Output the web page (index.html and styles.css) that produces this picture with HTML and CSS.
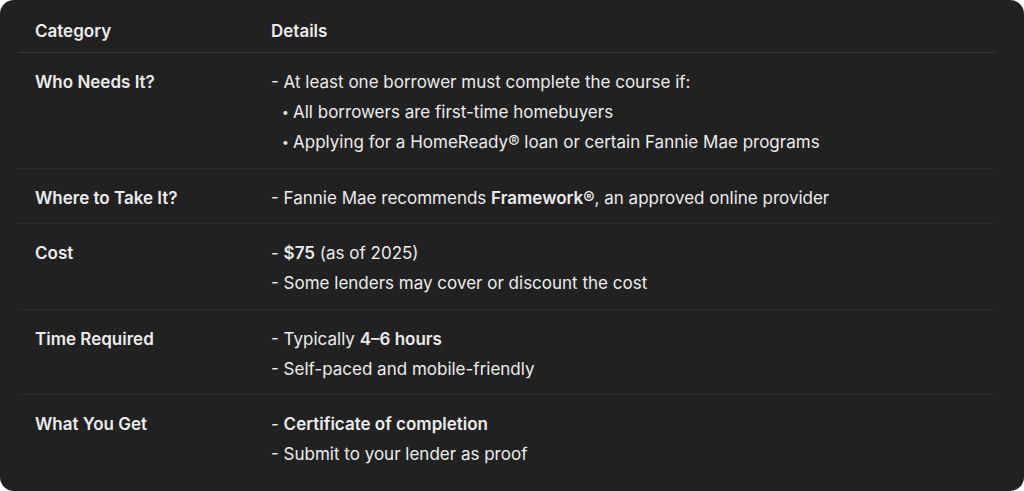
FILE: index.html
```html
<!DOCTYPE html>
<html>
<head>
<meta charset="utf-8">
<link rel="stylesheet" href="styles.css">
</head>
<body>
<div class="card">
  <div class="table">
    <div class="row head">
      <div class="cat">Category</div>
      <div class="det">Details</div>
    </div>
    <div class="row">
      <div class="cat">Who Needs It?</div>
      <div class="det">
        <div class="line">- At least one borrower must complete the course if:</div>
        <div class="line bullet"><span class="dot">•</span>All borrowers are first-time homebuyers</div>
        <div class="line bullet"><span class="dot">•</span>Applying for a HomeReady® loan or certain Fannie Mae programs</div>
      </div>
    </div>
    <div class="row">
      <div class="cat">Where to Take It?</div>
      <div class="det">
        <div class="line">- Fannie Mae recommends <b>Framework®</b>, an approved online provider</div>
      </div>
    </div>
    <div class="row">
      <div class="cat">Cost</div>
      <div class="det">
        <div class="line">- <b>$75</b> (as of 2025)</div>
        <div class="line">- Some lenders may cover or discount the cost</div>
      </div>
    </div>
    <div class="row">
      <div class="cat">Time Required</div>
      <div class="det">
        <div class="line">- Typically <b>4–6 hours</b></div>
        <div class="line">- Self-paced and mobile-friendly</div>
      </div>
    </div>
    <div class="row last">
      <div class="cat">What You Get</div>
      <div class="det">
        <div class="line">- <b>Certificate of completion</b></div>
        <div class="line">- Submit to your lender as proof</div>
      </div>
    </div>
  </div>
</div>
</body>
</html>
```
FILE: styles.css
```css
html, body {
  margin: 0;
  padding: 0;
  background: #ffffff;
}
body {
  width: 1024px;
  height: 491px;
  overflow: hidden;
}
.card {
  box-sizing: border-box;
  width: 1024px;
  height: 491px;
  background: #212121;
  border-radius: 14px;
  padding: 16px 29px 0 35px;
  font-family: Inter, "Noto Sans", sans-serif;
  font-size: 17px;
  color: #ececec;
}
.table {
  display: flex;
  flex-direction: column;
}
.row {
  display: grid;
  grid-template-columns: 236px 1fr;
  padding: 14px 0 10.6px 17px;
  margin-left: -17px;
  border-bottom: 1px solid #2b2b2b;
  line-height: 30px;
}
.row.head {
  padding-top: 0;
  padding-bottom: 6px;
  border-bottom-color: #3a3a3a;
}
.row.head .det {
  font-weight: 600;
}
.row.last {
  border-bottom: none;
}
.cat {
  font-weight: 600;
}
.det b {
  font-weight: 600;
}
.line.bullet {
  padding-left: 11px;
}
.dot {
  display: inline-block;
  width: 11px;
  font-size: 12px;
  vertical-align: top;
}
```
